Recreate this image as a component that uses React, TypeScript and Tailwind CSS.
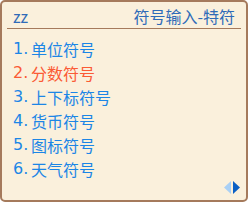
import React from 'react';

const items = ['单位符号', '分数符号', '上下标符号', '货币符号', '图标符号', '天气符号'];

const App: React.FC = () => {
  const selected = 1;

  return (
    <div
      className="w-[248px] h-[202px] bg-[#faf0dc] border-2 border-[#a57a5c] rounded-[5px] flex flex-col px-[5px]"
      style={{ fontFamily: '"Noto Sans CJK SC", "Liberation Sans", sans-serif' }}
    >
      {/* Header */}
      <div className="flex items-center justify-between h-[27px] pt-[2px] px-[6px] border-b border-[#a57a5c] text-[16px] leading-none text-[#2f6bb8]">
        <span>zz</span>
        <span>符号输入-特符</span>
      </div>

      {/* Candidates */}
      <div className="flex flex-col pt-[8px] pl-[6px]">
        {items.map((label, i) => (
          <div
            key={label}
            className={`h-[24px] flex items-center text-[16px] leading-none ${
              i === selected ? 'text-[#fb5b35]' : 'text-[#1c86e6]'
            }`}
          >
            <span className="w-[18px]" style={{ fontFamily: '"DejaVu Sans", sans-serif' }}>
              {i + 1}.
            </span>
            <span>{label}</span>
          </div>
        ))}
      </div>

      {/* Pager */}
      <div className="flex-1 flex items-end justify-end pb-[6px] pr-[1px] gap-[2px]">
        <svg width="7" height="13" viewBox="0 0 7 13">
          <polygon points="7,0 0,6.5 7,13" fill="#a9d0f5" />
        </svg>
        <svg width="7" height="13" viewBox="0 0 7 13">
          <polygon points="0,0 7,6.5 0,13" fill="#0a5fc4" />
        </svg>
      </div>
    </div>
  );
};

export default App;
